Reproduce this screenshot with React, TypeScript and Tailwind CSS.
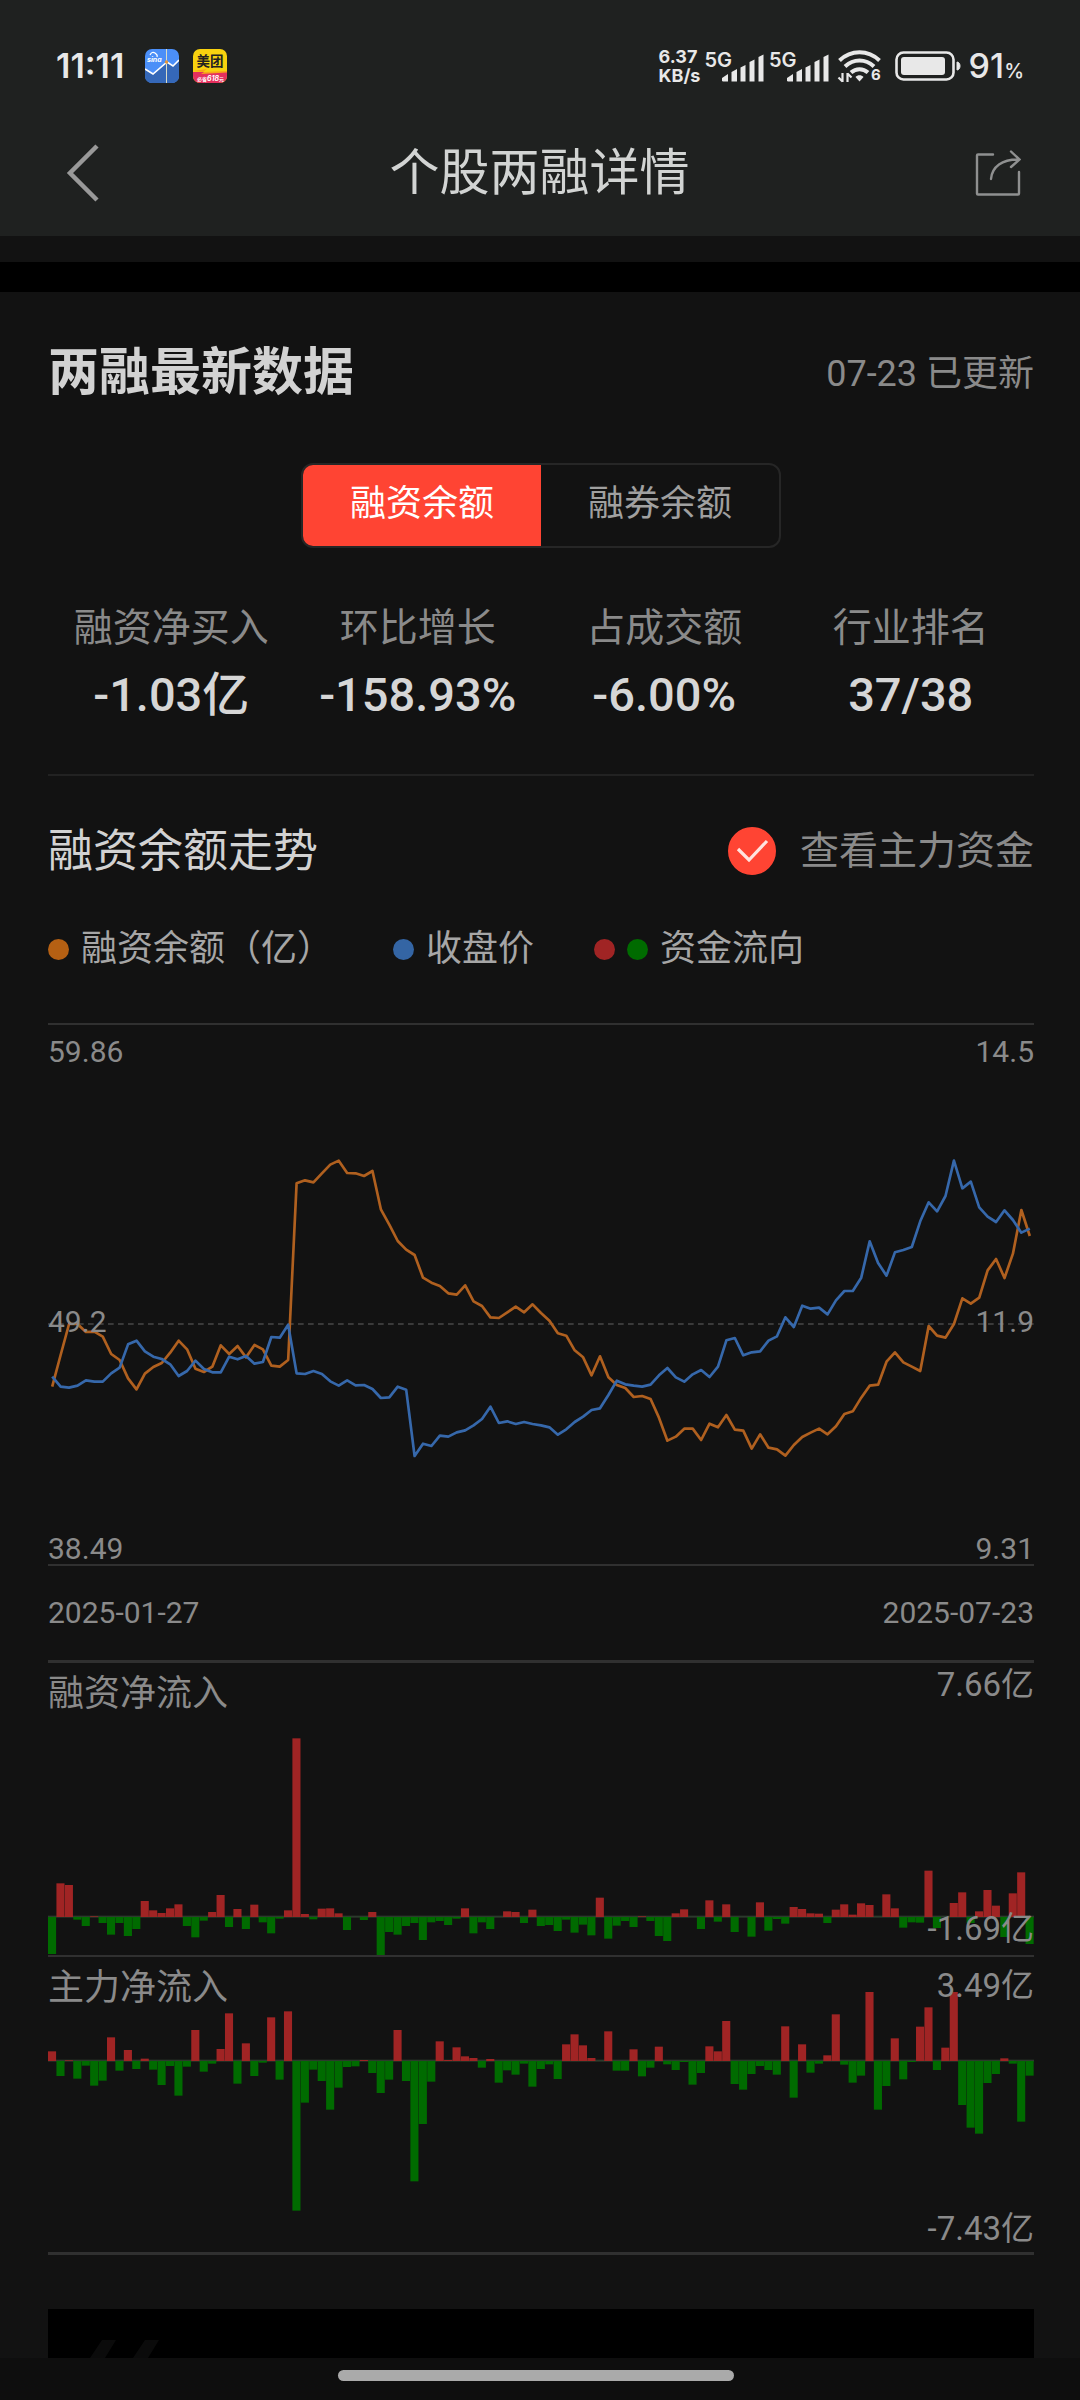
import React, { useState } from "react";

const BALANCE = [
  800, 705, 612, 612, 636, 635, 650, 702, 720, 775, 808, 761, 741, 729, 698, 662, 688, 746, 756, 740,
  676, 702, 678, 712, 675, 688, 737, 740, 720, 190, 181, 187, 160, 134, 122, 159, 160, 168, 153, 268,
  314, 363, 389, 405, 473, 488, 498, 520, 524, 496, 544, 558, 592, 594, 577, 560, 577, 553, 579, 602,
  640, 647, 691, 712, 766, 709, 772, 795, 804, 831, 828, 837, 893, 962, 950, 926, 926, 960, 911, 922,
  885, 929, 932, 986, 943, 983, 988, 1007, 975, 951, 938, 926, 943, 919, 882, 874, 833, 797, 794, 725,
  697, 727, 740, 753, 618, 647, 653, 612, 535, 551, 533, 451, 417, 474, 401, 270, 348,
];

const CLOSE = [
  770, 800, 803, 797, 781, 785, 785, 760, 743, 673, 662, 694, 710, 717, 733, 768, 753, 722, 747, 757,
  757, 710, 718, 708, 731, 726, 651, 653, 614, 760, 762, 753, 762, 784, 797, 781, 796, 795, 807, 834,
  832, 800, 809, 1008, 971, 978, 947, 950, 937, 931, 916, 897, 860, 909, 904, 912, 906, 912, 916, 922,
  944, 928, 906, 890, 870, 865, 825, 782, 793, 797, 800, 794, 766, 744, 772, 785, 763, 750, 771, 740,
  661, 654, 706, 697, 694, 662, 649, 592, 621, 557, 566, 563, 583, 541, 513, 513, 473, 364, 429, 467,
  397, 390, 381, 304, 247, 274, 228, 122, 205, 185, 262, 290, 306, 271, 300, 338, 326,
];

const MARGIN_FLOW = [
  -111, 101, 96, -8, -27, 2, -18, -53, -18, -57, -36, 48, 20, 12, 26, 38, -27, -61, -11, 15,
  66, -30, 24, -36, 37, -16, -49, -5, 20, 536, 9, -7, 25, 26, 11, -39, 0, -9, 15, -115,
  -45, -53, -27, -18, -69, -16, -12, -24, -5, 26, -49, -16, -36, 0, 17, 15, -18, 22, -27, -24,
  -42, -8, -47, -23, -55, 58, -65, -26, -12, -30, 2, -12, -57, -72, 11, 23, 0, -36, 50, -14,
  38, -45, 0, -59, 44, -41, -6, -20, 30, 24, 11, 10, -18, 22, 38, 7, 41, 36, 0, 68,
  26, -32, -16, -17, 139, -33, 0, 42, 74, -18, 17, 81, 34, -60, 71, 134, -81,
];

const MAIN_FLOW = [
  29, -45, 2, -53, -14, -74, -59, 71, -29, 33, -24, 7, -26, -72, -15, -104, -17, 93, -32, -8,
  36, 143, -68, 53, -45, -5, 131, -56, 149, -449, -125, -26, -60, -146, -80, -18, -16, 3, -36, -96,
  -56, 93, -60, -361, -189, -62, 59, 3, 41, 14, 9, -20, 6, -65, -28, -41, -8, -77, -24, -10,
  -54, 50, 80, 47, 9, 0, 89, -29, -29, 35, -46, -20, 43, -10, -27, -3, -71, -36, 44, 29,
  120, -69, -86, -39, -15, -27, -41, 104, -110, 50, -35, -8, 17, 140, -11, -65, -44, 207, -146, -75,
  68, -55, -3, 103, 161, -27, 40, 207, -132, -200, -218, -66, -39, 8, -8, -182, -44,
];

const STATS = [
  { label: "融资净买入", value: "-1.03亿" },
  { label: "环比增长", value: "-158.93%" },
  { label: "占成交额", value: "-6.00%" },
  { label: "行业排名", value: "37/38" },
];

const TABS = ["融资余额", "融券余额"];

// width of the plots in drawing units, three to a pixel
const PLOT_WIDTH = 2958;
const STEP = PLOT_WIDTH / 117;

const toPoints = (values: number[]) =>
  values.map((y, i) => `${((i + 0.5) * STEP).toFixed(1)},${y}`).join(" ");

const SignalBars = () => (
  <div className="flex items-start">
    <span className="text-[20px] font-semibold leading-[20px]">5G</span>
    <svg className="-ml-[10px] mt-1" width="42" height="28" viewBox="0 0 42 28" fill="#e8e8e8">
      <path d="M0 27v-3l6-4v7.500H1zM9.500 27.500V18l5.500-3v12.500zM18.500 27.500v-14l5-2.500v16.500zM27.500 27.500V8l5-2.500v22zM36.500 27.500V3l5-2.500v27z" />
    </svg>
  </div>
);

const WifiIcon = () => (
  <svg width="46" height="36" viewBox="0 0 46 36" fill="none" stroke="#e8e8e8">
    <path d="M2.500 12.500C14 1.500 31 1.500 42.500 12.500" strokeWidth="4" />
    <path d="M8 18.500C16.500 10.500 28.500 10.500 37 18.500" strokeWidth="4" />
    <path d="M14 24.500c5-4.500 12-4.500 17 0" strokeWidth="4" />
    <path d="M18.500 29c2-2.500 6-2.500 8 0l-4 4.500z" fill="#e8e8e8" stroke="none" />
    <path d="M5.500 25v9M1.500 29.500l4 4M10.500 34v-9M10.500 25.500l4 4" strokeWidth="2.200" />
    <text x="34" y="32" fontSize="15" fontWeight="700" fill="#e8e8e8" stroke="none" fontFamily="Inter, sans-serif">
      6
    </text>
  </svg>
);

const BatteryIcon = () => (
  <svg width="66" height="32" viewBox="0 0 66 32" fill="none">
    <rect x="1.500" y="2.500" width="57" height="27" rx="7" stroke="#e8e8e8" strokeWidth="2.600" />
    <rect x="6" y="7" width="44" height="18" rx="3" fill="#e8e8e8" />
    <path d="M62 12c4 0 4 8 0 8z" fill="#e8e8e8" stroke="#e8e8e8" />
  </svg>
);

const FinanceAppIcon = () => (
  <svg width="34" height="34" viewBox="0 0 34 34">
    <defs>
      <clipPath id="finance-icon">
        <rect width="34" height="34" rx="7" />
      </clipPath>
    </defs>
    <g clipPath="url(#finance-icon)">
      <rect width="34" height="34" fill="#4b8ff8" />
      <path d="M0 20l8 5 14-12 6 4 6-6v23H0z" fill="#3568b8" />
      <path d="M0 20l8 5 14-12 6 4 6-6" fill="none" stroke="#fff" strokeWidth="1.600" />
      <path d="M21.500 0v34" stroke="#d9dcc8" strokeWidth="1" />
      <circle cx="21.500" cy="13" r="1.700" fill="#e2953a" />
      <path d="M5 6q2-4 5-2t2 4" fill="none" stroke="#fff" strokeWidth="1.200" />
      <text x="2" y="13" fontSize="7" fontWeight="700" fontStyle="italic" fill="#fff" fontFamily="Inter, sans-serif">
        sina
      </text>
    </g>
  </svg>
);

const MeituanIcon = () => (
  <svg width="34" height="34" viewBox="0 0 34 34" fontFamily="'Noto Sans CJK SC', sans-serif" fontWeight="700">
    <defs>
      <clipPath id="meituan-icon">
        <rect width="34" height="34" rx="7" />
      </clipPath>
    </defs>
    <g clipPath="url(#meituan-icon)">
      <rect width="34" height="34" fill="#f8d20f" />
      <path d="M0 23h34v11H0z" fill="#e52f5d" />
      <path d="M0 22l14-2-4 3 24-1v1.500L8 25l3-2z" fill="#f8a51a" />
      <text x="3.500" y="17" fontSize="13.500" fill="#222">
        美团
      </text>
      <text x="4" y="32" fontSize="5" fill="#fff">
        必省
      </text>
      <text x="14" y="32" fontSize="7" fontStyle="italic" fill="#fff" fontFamily="Inter, sans-serif">
        618
      </text>
      <text x="26" y="32" fontSize="5" fill="#fff">
        元
      </text>
    </g>
  </svg>
);

const StatusBar = () => (
  <div className="flex h-[132px] items-center justify-between pl-14 pr-14 font-['Inter','Noto_Sans_CJK_SC',sans-serif] text-[#e8e8e8]">
    <div className="flex items-center gap-[14px]">
      <span className="mr-[7px] text-[34px] font-semibold leading-none">11:11</span>
      <FinanceAppIcon />
      <MeituanIcon />
    </div>
    <div className="flex items-center">
      <div className="mr-1 text-[18px] font-bold leading-[19px]">
        <div>6.37</div>
        <div>KB/s</div>
      </div>
      <div className="mr-2 flex gap-[5px]">
        <SignalBars />
        <SignalBars />
      </div>
      <WifiIcon />
      <div className="ml-3 mr-2">
        <BatteryIcon />
      </div>
      <div className="flex items-baseline leading-none">
        <span className="text-[34px] font-medium">91</span>
        <span className="text-[20px] font-medium">%</span>
      </div>
    </div>
  </div>
);

const NavBar = () => (
  <nav className="flex h-[82px] items-center justify-between pl-[66px] pr-[59px]">
    <button type="button" aria-label="返回">
      <svg width="38" height="58" viewBox="0 0 38 58" fill="none" stroke="#999" strokeWidth="4.500">
        <path d="M31 2L4 29l27 27" />
      </svg>
    </button>
    <h1 className="text-[50px] leading-none text-[#d2d4d3]">个股两融详情</h1>
    <button type="button" aria-label="分享">
      <svg width="46" height="46" viewBox="0 0 46 46" fill="none" stroke="#8f9090" strokeWidth="2.400" strokeLinecap="round">
        <path d="M18 4.500H3q-1 0-1 1v38q0 1 1 1h40q1 0 1-1V22" />
        <path d="M16 29C17 17 27 9 44 9.500M36 1.500l8.500 8L36 17" />
      </svg>
    </button>
  </nav>
);

interface BarPlotProps {
  name: string;
  values: number[];
  max: string;
  min: string;
  baseline: number;
  height: number;
  className: string;
  minClassName: string;
  maxClassName: string;
}

const BarPlot = ({ name, values, max, min, baseline, height, className, minClassName, maxClassName }: BarPlotProps) => (
  <div className={`relative border-[#303030] text-[#8a8a8a] ${className}`}>
    <svg
      className="block h-full w-full"
      viewBox={`0 ${-baseline} ${PLOT_WIDTH} ${height}`}
      preserveAspectRatio="none"
      role="img"
      aria-label={name}
    >
      <rect x="0" y="-4" width={PLOT_WIDTH} height="6" fill="#2c3a2c" />
      {values.map((v, i) => (
        <rect
          key={i}
          x={i * STEP}
          y={v > 0 ? -v : 0}
          width={STEP - 1}
          height={Math.abs(v)}
          fill={v > 0 ? "#a02424" : "#006b00"}
        />
      ))}
    </svg>
    <h3 className="absolute left-0 top-[13px] text-[36px] leading-[36px]">{name}</h3>
    <span className={`absolute right-0 text-[33px] leading-[32px] ${maxClassName}`}>{max}</span>
    <span className={`absolute right-0 text-[33px] leading-[32px] ${minClassName}`}>{min}</span>
  </div>
);

const TrendPlot = () => (
  <div className="relative h-[543px] border-y-2 border-[#303030] text-[30px] leading-[30px] text-[#8a8a8a]">
    <svg
      className="block h-full w-full"
      viewBox={`0 -285 ${PLOT_WIDTH} 1617`}
      preserveAspectRatio="none"
      fill="none"
      role="img"
      aria-label="融资余额走势"
    >
      <path d={`M0 612H${PLOT_WIDTH}`} stroke="#3a3a3a" strokeWidth="6" strokeDasharray="17 13" />
      <polyline points={toPoints(BALANCE)} stroke="#b0601f" strokeWidth="8" strokeLinejoin="round" />
      <polyline points={toPoints(CLOSE)} stroke="#3668ab" strokeWidth="8" strokeLinejoin="round" />
    </svg>
    <div className="absolute inset-x-0 top-3 flex justify-between">
      <span>59.86</span>
      <span>14.5</span>
    </div>
    <div className="absolute inset-x-0 top-[282px] flex justify-between">
      <span>49.2</span>
      <span>11.9</span>
    </div>
    <div className="absolute inset-x-0 bottom-0 flex justify-between">
      <span>38.49</span>
      <span>9.31</span>
    </div>
  </div>
);

const Dot = ({ className }: { className: string }) => (
  <span className={`h-[21px] w-[21px] rounded-full ${className}`} />
);

const App = () => {
  const [activeTab, setActiveTab] = useState(TABS[0]);
  const [showMain, setShowMain] = useState(true);

  return (
    <div className="min-h-screen bg-[#121212] font-['Roboto','Noto_Sans_CJK_SC',sans-serif]">
      <header className="bg-[#1f2120] pb-[22px]">
        <StatusBar />
        <NavBar />
      </header>
      <div className="mt-[26px] h-[30px] bg-black" />

      <main className="pl-12 pr-[46px]">
        <div className="flex h-[160px] items-center justify-between">
          <h2 className="text-[51px] font-bold leading-none text-[#d2d2d2]">两融最新数据</h2>
          <span className="pt-1 text-[36px] leading-none text-[#8a8a8a]">07-23 已更新</span>
        </div>

        <div className="mt-[11px] flex justify-center">
          <div className="flex overflow-hidden rounded-[12px] border-2 border-[#262626]">
            {TABS.map((tab) => (
              <button
                key={tab}
                type="button"
                onClick={() => setActiveTab(tab)}
                className={`h-[81px] w-[238px] pb-1 text-[36px] leading-none ${
                  tab === activeTab ? "bg-[#ff4433] text-white" : "text-[#a0a0a0]"
                }`}
              >
                {tab}
              </button>
            ))}
          </div>
        </div>

        <dl className="mt-[56px] grid grid-cols-4 border-b-2 border-[#222] pb-[51px] text-center">
          {STATS.map((stat) => (
            <div key={stat.label}>
              <dt className="text-[39px] leading-[48px] text-[#8a8a8a]">{stat.label}</dt>
              <dd className="mt-[15px] text-[47px] font-medium leading-[56px] text-[#d6d6d6]">{stat.value}</dd>
            </div>
          ))}
        </dl>

        <div className="mt-[49px] flex h-[52px] items-center justify-between">
          <h2 className="text-[45px] leading-none text-[#d2d2d2]">融资余额走势</h2>
          <label className="flex items-center gap-6 text-[39px] leading-none text-[#8a8a8a]">
            <span className="grid place-items-center">
              <input
                type="checkbox"
                checked={showMain}
                onChange={(e) => setShowMain(e.target.checked)}
                className="col-start-1 row-start-1 h-12 w-12 appearance-none rounded-full border-2 border-[#666] checked:border-[#ff4433] checked:bg-[#ff4433]"
              />
              {showMain && (
                <svg
                  className="pointer-events-none col-start-1 row-start-1"
                  width="48"
                  height="48"
                  viewBox="0 0 48 48"
                  fill="none"
                  stroke="#ffe3df"
                  strokeWidth="3.200"
                >
                  <path d="M10 22l11 11 18-19" />
                </svg>
              )}
            </span>
            查看主力资金
          </label>
        </div>

        <div className="mt-[52px] flex h-[40px] items-center gap-[60px] text-[36px] leading-none text-[#a6a6a6]">
          <span className="flex items-center gap-3">
            <Dot className="bg-[#b56013]" />
            融资余额（亿）
          </span>
          <span className="flex items-center gap-3">
            <Dot className="bg-[#3465a4]" />
            收盘价
          </span>
          <span className="flex items-center gap-3">
            <Dot className="bg-[#a02424]" />
            <Dot className="bg-[#006b00]" />
            资金流向
          </span>
        </div>

        <section className="mt-[54px]">
          <TrendPlot />
          <div className="flex h-[94px] items-center justify-between text-[30px] leading-none text-[#8a8a8a]">
            <span>2025-01-27</span>
            <span>2025-07-23</span>
          </div>
          <BarPlot
            name="融资净流入"
            values={MARGIN_FLOW}
            max="7.66亿"
            min="-1.69亿"
            baseline={762}
            height={876}
            className="h-[297px] border-b-2 border-t-3"
            maxClassName="top-[6px]"
            minClassName="bottom-[10px]"
          />
          {showMain && (
            <BarPlot
              name="主力净流入"
              values={MAIN_FLOW}
              max="3.49亿"
              min="-7.43亿"
              baseline={312}
              height={885}
              className="h-[298px] border-b-3"
              maxClassName="top-[13px]"
              minClassName="bottom-[7px]"
            />
          )}
        </section>

        <div className="mt-[54px] h-[49px] bg-black">
          <svg className="block" width="130" height="49" viewBox="0 0 130 49" fill="#0b0b0b">
            <path d="M54 31h14L57 49H42zM97 31h14L100 49H85z" />
          </svg>
        </div>
      </main>

      <footer className="flex h-[42px] justify-center bg-[#0e0e0e] pr-2 pt-3">
        <div className="h-[11px] w-[37%] rounded-full bg-[#aaa]" />
      </footer>
    </div>
  );
};

export default App;
